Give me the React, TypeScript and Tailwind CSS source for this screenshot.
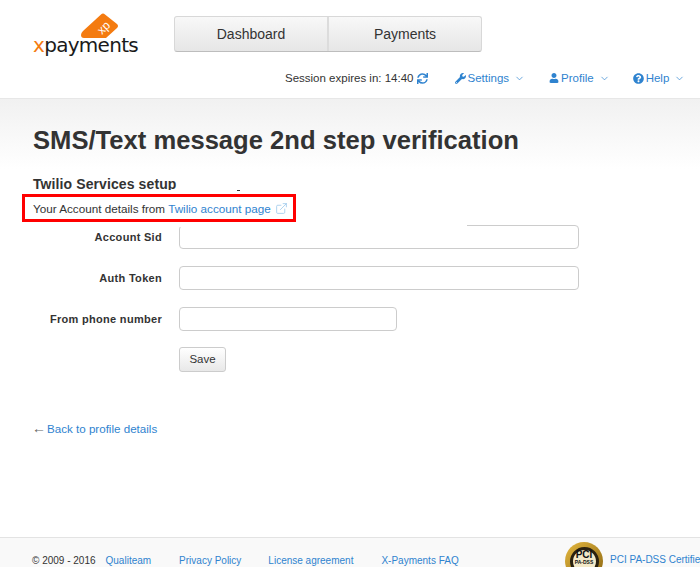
import React from "react";
import { FaSync, FaWrench, FaUser, FaQuestionCircle } from "react-icons/fa";
import { ChevronDown, ExternalLink } from "lucide-react";

function Logo() {
  return (
    <div className="w-[106px]">
      <svg className="block ml-[48px]" width="38" height="26" viewBox="0 0 38 26">
        <path d="M20 1.5 Q22 -0.5 24 1.5 L36 11 Q38 13 36 15 L25 25 L3 25 Q0 25 0 22 Q0 20 2 18 Z" fill="#f47b10" />
        <text x="0" y="0" transform="translate(21,22) rotate(-45)" fontFamily="Liberation Sans" fontSize="12" fill="#fff">xp</text>
      </svg>
      <div className="-mt-[3px] h-[18px] text-[20px] leading-[18px] font-['DejaVu_Sans'] text-[#1a1a1a] tracking-[-0.7px] whitespace-nowrap">
        <span className="text-[#f47b10]">x</span>payments
      </div>
    </div>
  );
}

function MenuItem({ icon, label, className }: { icon: React.ReactNode; label: string; className: string }) {
  return (
    <a className={`flex items-center text-[#2f83cf] ${className}`}>
      {icon}
      <span className="ml-[2px]">{label}</span>
      <ChevronDown size={11} strokeWidth={1.5} className="ml-[5px]" />
    </a>
  );
}

function Field({ label, width }: { label: string; width: string }) {
  return (
    <div className="flex items-center h-[24px] mb-[17px]">
      <label className="w-[162px] text-right text-[11px] font-bold tracking-[0.3px] text-[#333]">{label}</label>
      <input className={`ml-[17px] h-[24px] ${width} border border-[#ccc] rounded-[4px] bg-white`} />
    </div>
  );
}

export default function App() {
  return (
    <div className="relative h-[567px] w-[700px] overflow-hidden bg-white font-['Liberation_Sans',Arial,sans-serif] text-[#333]">
      <header className="h-[99px] border-b border-[#e7e7e7] flex">
        <div className="w-[174px] pl-[33px] pt-[13px]">
          <Logo />
        </div>
        <div className="flex-1">
          <nav className="mt-[16px] w-[308px] h-[36px] flex border border-[#d8d8d8] border-b-[#bdbdbd] rounded-[3px] bg-gradient-to-b from-[#f8f8f8] to-[#e6e6e6] text-[14px]">
            <a className="w-[154px] border-r-2 border-[#dcdcdc] flex items-center justify-center">Dashboard</a>
            <a className="flex-1 flex items-center justify-center">Payments</a>
          </nav>
          <div className="mt-[19px] h-[14px] flex items-center text-[11.5px] leading-[14px]">
            <span className="ml-[111px]">Session expires in: 14:40</span>
            <FaSync size={11} className="ml-[3px] text-[#2f83cf]" />
            <MenuItem className="ml-[27px]" label="Settings" icon={<FaWrench size={11} />} />
            <MenuItem className="ml-[24px]" label="Profile" icon={<FaUser size={10} />} />
            <MenuItem className="ml-[23px]" label="Help" icon={<FaQuestionCircle size={11} />} />
          </div>
        </div>
      </header>
      <main className="h-[438px] bg-gradient-to-b from-[#f1f1f1] to-white to-[70px] pl-[33px] bg-no-repeat">
        <h1 className="pt-[25px] text-[25.6px] leading-[32px] font-bold text-[#333]">SMS/Text message 2nd step verification</h1>
        <h2 className="mt-[20px] text-[14px] leading-[16px] font-bold tracking-[0.1px]">Twilio Services setup</h2>
        <p className="mt-[10px] text-[11.7px] leading-[14px]">
          Your Account details from <a className="text-[#2f83cf]">Twilio account page</a>
          <ExternalLink size={13} strokeWidth={1.3} className="inline ml-[4px] mb-[2px] text-[#8fc0e8]" />
        </p>
        <div className="mt-[8px] -ml-[33px]">
          <Field label="Account Sid" width="w-[400px]" />
          <Field label="Auth Token" width="w-[400px]" />
          <Field label="From phone number" width="w-[218px]" />
          <button className="block -mt-[1px] ml-[179px] w-[47px] h-[25px] border border-[#ccc] rounded-[3px] bg-gradient-to-b from-white to-[#e8e8e8] text-[11.5px] text-[#333]">Save</button>
        </div>
        <p className="mt-[50px] -ml-[1px] flex items-center h-[14px] text-[11.6px] leading-[14px]">
          <span className="w-[15px] -mt-[3px] text-[#666] text-[14px]">←</span>
          <a className="text-[#2f83cf]">Back to profile details</a>
        </p>
      </main>
      <footer className="h-[30px] border-t border-[#e3e3e3] bg-[#f9f9f9] flex items-start pl-[32px] pt-[16px] text-[10px] leading-[14px]">
        <span>© 2009 - 2016</span>
        <a className="ml-[10px] text-[#2f83cf]">Qualiteam</a>
        <a className="ml-[28px] text-[#2f83cf]">Privacy Policy</a>
        <a className="ml-[27px] text-[#2f83cf]">License agreement</a>
        <a className="ml-[28px] text-[#2f83cf]">X-Payments FAQ</a>
      </footer>
      <div className="absolute left-[565px] top-[542px] w-[38px] h-[38px] rounded-full bg-gradient-to-br from-[#e6b93f] to-[#8a6510] flex items-center justify-center">
        <div className="w-[29px] h-[29px] rounded-full bg-[#f3e9c8] border-[3px] border-[#2a2110] flex flex-col items-center">
          <span className="text-[10px] leading-[10px] font-bold text-[#111]">PCI</span>
          <span className="text-[5px] leading-[5px] font-bold text-[#111]">PA-DSS</span>
        </div>
      </div>
      <a className="absolute left-[610px] top-[553px] whitespace-nowrap text-[10px] leading-[14px] text-[#2f83cf]">PCI PA-DSS Certified</a>
      <div className="absolute left-[30px] top-[190px] w-[160px] h-[4px] bg-white" />
      <div className="absolute left-[237px] top-[190px] w-[3px] h-[1px] bg-[#333]" />
      <div className="absolute left-[179px] top-[224px] w-[288px] h-[3px] bg-white" />
      <div className="absolute left-[22px] top-[194px] w-[274px] h-[28px] border-[3px] border-[#f00]" />
    </div>
  );
}
